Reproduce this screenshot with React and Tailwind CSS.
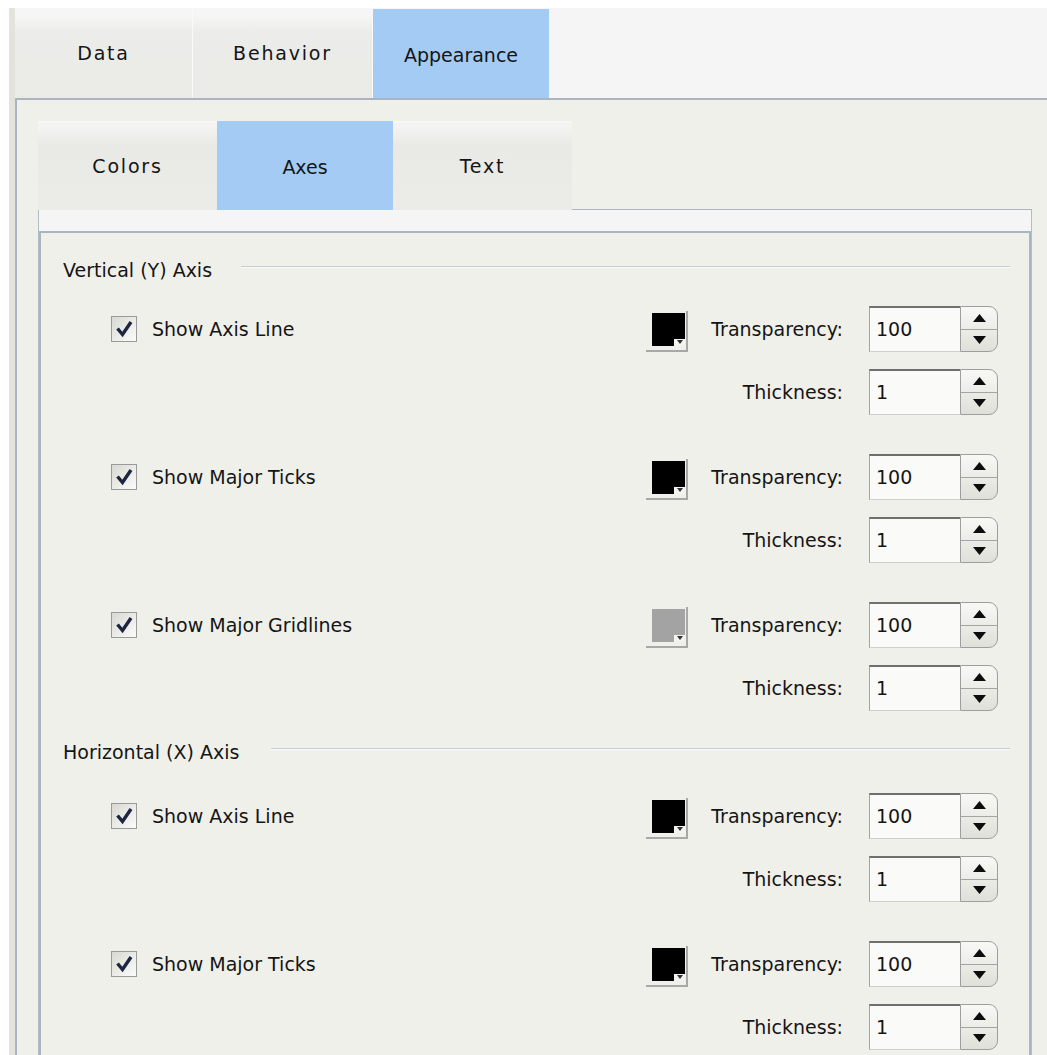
import React from "react";

function Check() {
  return (
    <div className="flex h-[26px] w-[26px] shrink-0 items-center justify-center border-[1.5px] border-[#9a9a9a] bg-linear-to-br from-[#d9d9d3] to-[#fbfbfa]">
      <svg width="22" height="22" viewBox="0 0 22 22">
        <polyline points="4.5,10.5 9.5,16.5 18,4" fill="none" stroke="#1e2540" strokeWidth="3.4" strokeLinejoin="miter" />
      </svg>
    </div>
  );
}

function Swatch({ color }) {
  return (
    <div className="mt-[4px] h-[41px] w-[42px] shrink-0 border-r-2 border-b-2 border-[#a8a8a8]">
      <div className="relative ml-[6px] mt-[2px] h-[33px] w-[33px]" style={{ background: color }}>
        <div className="absolute bottom-0 right-0 flex h-[7px] w-[11px] items-center justify-center bg-[#f3f3f0]">
          <svg width="6" height="4" viewBox="0 0 6 4">
            <polygon points="0,0 6,0 3,4" fill="#333" />
          </svg>
        </div>
      </div>
    </div>
  );
}

function Spin({ value }) {
  return (
    <div className="flex h-[46px] shrink-0">
      <div className="flex w-[91px] items-center border-t-2 border-l border-b border-t-[#6f6f6f] border-l-[#a2a2a2] border-b-[#cfcfcf] bg-[#fafaf8] pl-[6px]">
        {value}
      </div>
      <div className="flex w-[38px] flex-col rounded-r-[9px] border border-[#9e9e9e] bg-linear-to-b from-[#f8f8f5] to-[#e0e0da]">
        <div className="flex flex-1 items-center justify-center border-b border-[#a4a4a4]">
          <svg width="13" height="8" viewBox="0 0 13 8">
            <polygon points="0,8 6.5,0 13,8" fill="#0d0d0d" />
          </svg>
        </div>
        <div className="flex flex-1 items-center justify-center">
          <svg width="13" height="8" viewBox="0 0 13 8">
            <polygon points="0,0 13,0 6.5,8" fill="#0d0d0d" />
          </svg>
        </div>
      </div>
    </div>
  );
}

function Group({ label, color, first }) {
  return (
    <div className={first ? "mt-[24px]" : "mt-[39px]"}>
      <div className="flex h-[46px] items-center">
        <div className="flex flex-1 items-center pl-[48px]">
          <Check />
          <span className="ml-[15px]">{label}</span>
        </div>
        <Swatch color={color} />
        <div className="w-[155px] text-right">Transparency:</div>
        <div className="ml-[26px]">
          <Spin value="100" />
        </div>
      </div>
      <div className="mt-[17px] flex h-[46px] items-center">
        <div className="flex-1" />
        <div className="w-[155px] text-right">Thickness:</div>
        <div className="ml-[26px]">
          <Spin value="1" />
        </div>
      </div>
    </div>
  );
}

function Heading({ title, gap }) {
  return (
    <div className="-mr-[12px] flex h-[24px]">
      <span className="leading-[24px]">{title}</span>
      <div className={`mt-[8px] h-0 flex-1 border-t border-b border-t-[#c6cbd1] border-b-[#fafafa] ${gap}`} />
    </div>
  );
}

function TopTab({ label, active, w }) {
  if (active) {
    return (
      <div className={`mt-[1px] flex items-center justify-center bg-[#a3cbf4] ${w}`}>
        <span className="mt-[4px]">{label}</span>
      </div>
    );
  }
  return (
    <div className={`flex items-center justify-center border-r border-[#f9f9f9] bg-linear-to-b from-[#f6f6f6] from-10% via-[#ececea] via-25% to-[#eaeae6] tracking-[1.8px] ${w}`}>
      {label}
    </div>
  );
}

function SubTab({ label, active, w }) {
  if (active) {
    return (
      <div className={`flex items-center justify-center bg-[#a3cbf4] ${w}`}>
        <span className="mt-[3px]">{label}</span>
      </div>
    );
  }
  return (
    <div className={`flex items-center justify-center border-t-2 border-[#f7f7f5] bg-linear-to-b from-[#f3f3f1] from-5% via-[#e9e9e5] via-25% to-[#ebebe7] tracking-[1.8px] ${w}`}>
      {label}
    </div>
  );
}

export default function App() {
  return (
    <div className="h-[1055px] w-[1047px] overflow-hidden bg-white font-['DejaVu_Sans',sans-serif] text-[19px] text-[#151515]">
      <div className="flex h-full pl-[9px] pt-[8px]">
        <div className="w-[6px] shrink-0 bg-[#e3e3db]" />
        <div className="flex min-w-0 flex-1 flex-col">
          <div className="flex h-[90px] shrink-0 bg-[#f5f5f5]">
            <TopTab label="Data" w="w-[178px]" />
            <TopTab label="Behavior" w="w-[180px]" />
            <TopTab label="Appearance" active w="w-[176px]" />
          </div>
          <div className="flex flex-1 flex-col border-l-2 border-t-2 border-[#a9b5c2] bg-[#f0f0ea] pl-[21px] pr-[15px] pt-[21px]">
            <div className="flex h-[89px] shrink-0">
              <SubTab label="Colors" w="w-[179px]" />
              <SubTab label="Axes" active w="w-[176px]" />
              <SubTab label="Text" w="w-[179px]" />
              <div className="flex-1 border-b border-[#aab5c1]" />
            </div>
            <div className="flex flex-1 flex-col border-l border-r border-[#b3bdc8] bg-[#f5f5f5] pt-[21px]">
              <div className="flex-1 border-2 border-b-0 border-[#a9b5c2] bg-[#f0f0ea] pl-[22px] pr-[31px] pt-[25px]">
                <Heading title="Vertical (Y) Axis" gap="ml-[29px]" />
                <Group label="Show Axis Line" color="#000" first />
                <Group label="Show Major Ticks" color="#000" />
                <Group label="Show Major Gridlines" color="#a3a3a3" />
                <div className="mt-[29px]">
                  <Heading title="Horizontal (X) Axis" gap="ml-[32px]" />
                </div>
                <div className="pt-[5px]">
                  <Group label="Show Axis Line" color="#000" first />
                  <Group label="Show Major Ticks" color="#000" />
                </div>
              </div>
            </div>
          </div>
        </div>
      </div>
    </div>
  );
}
